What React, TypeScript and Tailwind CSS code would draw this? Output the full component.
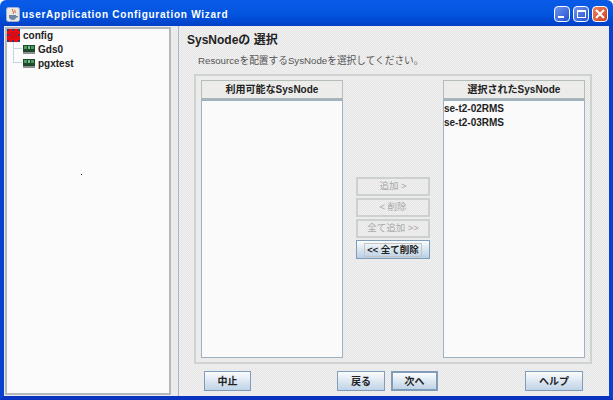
import React from 'react';

const FONT = "font-['Liberation_Sans','Noto_Sans_CJK_JP',sans-serif]";

function ChipIcon() {
  return (
    <svg width="12" height="9" viewBox="0 0 12 9" className="shrink-0">
      <rect x="0" y="0" width="12" height="7" fill="#1c4a2c" />
      <rect x="1" y="1" width="3" height="3" fill="#4f9a5c" />
      <rect x="5" y="1" width="2" height="3" fill="#7fc08a" />
      <rect x="8" y="1" width="3" height="3" fill="#4f9a5c" />
      <path d="M1 7v2M3 7v2M5 7v2M7 7v2M9 7v2M11 7v2" stroke="#222" strokeWidth="1" />
    </svg>
  );
}

function ConfigIcon() {
  return (
    <svg width="13" height="13" viewBox="0 0 13 13" className="shrink-0">
      <rect width="13" height="13" fill="#f00a0a" />
      <rect x="3" y="3" width="7" height="7" fill="#d40d18" />
      <path d="M0 0h2v2H0zM5 0h2v2H5zM11 0h2v2h-2zM0 5h2v2H0zM11 5h2v2h-2zM0 11h2v2H0zM5 11h2v2H5zM11 11h2v2h-2z" fill="#2a3f7a" />
    </svg>
  );
}

function JavaIcon() {
  return (
    <svg width="14" height="15" viewBox="0 0 14 15" className="shrink-0">
      <rect x="0.5" y="0.5" width="13" height="14" rx="2" fill="#ece9df" stroke="#9fb0d8" />
      <path d="M7 2c-2 2 2 3 0 5M9 3c-1 1 1 2 0 3" stroke="#c8562e" strokeWidth="1" fill="none" />
      <path d="M3 8h7v2c0 2-1 3-3 3s-4-1-4-3z" fill="#6d86a8" />
      <path d="M10 9h2v1l-2 1z" fill="#6d86a8" />
    </svg>
  );
}

function SmallButton({ label, enabled = false }: { label: string; enabled?: boolean }) {
  return enabled ? (
    <div className="h-[19px] flex items-center justify-center border border-[#7f9db9] bg-gradient-to-b from-[#fafcfd] to-[#b9cfe4]">
      <span className="px-0.5 border border-[#c5c5c5] leading-[12px] text-[9.5px] font-bold text-[#222]">&lt;&lt; 全て削除</span>
    </div>
  ) : (
    <div className="h-[19px] flex items-center justify-center border-2 border-[#cdd1cd] text-[9.5px] text-[#a9a9a9]">{label}</div>
  );
}

function FootButton({ label, width, focused = false }: { label: string; width: string; focused?: boolean }) {
  return (
    <div
      className={`${width} h-5 flex items-center justify-center border ${focused ? 'border-[#7f9db9] border-2' : 'border-[#7f9db9]'} bg-gradient-to-b from-[#fbfcfd] to-[#c0d3e6] text-[10px] font-bold text-[#222]`}
    >
      {label}
    </div>
  );
}

function NodeList({ title, items }: { title: string; items: string[] }) {
  return (
    <div className="w-[142px] flex flex-col">
      <div className="h-[20px] flex items-center justify-center border border-[#b4bdb8] border-b-2 border-b-[#a9b5b5] bg-[#ececea] text-[10px] font-bold text-[#222]">
        {title}
      </div>
      <div className="flex-1 bg-[#fafafa] border border-[#9db0c4] pt-px">
        {items.map((item) => (
          <div key={item} className="h-[14px] leading-[14px] text-[10px] font-bold text-[#222]">
            {item}
          </div>
        ))}
      </div>
    </div>
  );
}

export default function App() {
  return (
    <div className={`${FONT} w-[613px] h-[400px] flex flex-col overflow-hidden bg-white`}>
      {/* title bar */}
      <div className="h-[26px] shrink-0 flex items-center rounded-t-md pl-[6px] pr-[5px] pt-[2px] bg-gradient-to-b from-[#0a5ae8] via-[#0356e0] to-[#0340c8]">
        <JavaIcon />
        <span className="ml-[2px] flex-1 text-[10px] font-bold text-white tracking-[0.75px]">userApplication Configuration Wizard</span>
        <div className="flex gap-[3px]">
          <div className="w-[16px] h-[16px] rounded-sm border border-white bg-gradient-to-br from-[#6f94ec] to-[#2350d0] flex items-end pl-[3px] pb-[3px]">
            <div className="w-[6px] h-[2px] bg-white" />
          </div>
          <div className="w-[16px] h-[16px] rounded-sm border border-white bg-gradient-to-br from-[#6f94ec] to-[#2350d0] flex items-center justify-center">
            <div className="w-[9px] h-[8px] border border-white border-t-2" />
          </div>
          <div className="w-[16px] h-[16px] rounded-sm border border-white bg-gradient-to-br from-[#ec8060] to-[#d03c18] flex items-center justify-center">
            <svg width="10" height="10" viewBox="0 0 10 10">
              <path d="M1 1l8 8M9 1l-8 8" stroke="#fff" strokeWidth="2" />
            </svg>
          </div>
        </div>
      </div>

      {/* window body */}
      <div className="flex-1 min-h-0 flex border-x-[4px] border-b-[4px] border-x-[#0a42d0] border-b-[#0a34c0] bg-[repeating-conic-gradient(#e6e6e6_0_25%,#f0f0f0_0_50%)] bg-[length:2px_2px]">
        {/* tree */}
        <div className="w-[166px] shrink-0 mt-px mb-px ml-px flex flex-col bg-[#fbfbfb] border-2 border-[#b4b8bc]">
          <div className="h-[13px] flex items-center gap-[3px] text-[10px] font-bold text-[#222]">
            <ConfigIcon />
            config
          </div>
          <div className="relative pl-[16px]">
            <div className="absolute left-[6px] top-0 h-[21px] w-[9px] border-l border-b border-[#c5d5e5]" />
            <div className="absolute left-[6px] top-0 h-[7px] w-[9px] border-b border-[#c5d5e5]" />
            <div className="h-[14px] flex items-center gap-[3px] text-[10px] font-bold text-[#222]">
              <ChipIcon />
              Gds0
            </div>
            <div className="h-[14px] flex items-center gap-[3px] text-[10px] font-bold text-[#222]">
              <ChipIcon />
              pgxtest
            </div>
          </div>
          <div className="pl-[74px] pt-[104px]">
            <div className="w-px h-px bg-[#222]" />
          </div>
        </div>

        {/* splitter */}
        <div className="w-2 shrink-0 border-r border-[#a9b7c6]" />

        {/* content */}
        <div className="flex-1 min-w-0 flex flex-col pl-[8px] pr-[17px]">
          <div className="mt-[7px] h-[14px] flex items-center text-[12px] font-bold text-[#222]">SysNodeの 選択</div>
          <div className="mt-[7px] h-[14px] pl-[11px] flex items-center text-[9.7px] text-[#555]">Resourceを配置するSysNodeを選択してください。</div>
          <div className="mt-[6px] ml-[7px] h-[290px] flex justify-between border-2 border-[#cfd3cf] px-[5px] py-[4px]">
            <NodeList title="利用可能なSysNode" items={[]} />
            <div className="w-[74px] flex flex-col justify-center gap-[2px] pb-[2px]">
              <SmallButton label="追加 >" />
              <SmallButton label="< 削除" />
              <SmallButton label="全て追加 >>" />
              <SmallButton label="" enabled />
            </div>
            <NodeList title="選択されたSysNode" items={['se-t2-02RMS', 'se-t2-03RMS']} />
          </div>
          <div className="mt-[7px] flex pl-[17px] pr-[9px]">
            <FootButton label="中止" width="w-[47px]" />
            <div className="ml-[86px]"><FootButton label="戻る" width="w-[48px]" /></div>
            <div className="ml-[6px]"><FootButton label="次へ" width="w-[47px]" focused /></div>
            <div className="ml-auto"><FootButton label="ヘルプ" width="w-[58px]" /></div>
          </div>
        </div>
      </div>
    </div>
  );
}
